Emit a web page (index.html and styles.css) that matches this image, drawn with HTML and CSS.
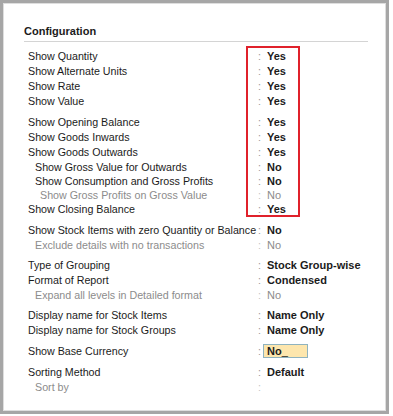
FILE: index.html
```html
<!DOCTYPE html>
<html lang="en">
<head>
    <meta charset="UTF-8">
    <meta name="viewport" content="width=device-width, initial-scale=1.0">
    <title>Configuration</title>
    <link rel="stylesheet" href="styles.css">
</head>
<body>
    <div class="panel">
        <h2 class="title">Configuration</h2>

        <div class="rows">
            <div class="group">
                <div class="row"><span class="label">Show Quantity</span><span class="colon">:</span><span class="value">Yes</span></div>
                <div class="row"><span class="label">Show Alternate Units</span><span class="colon">:</span><span class="value">Yes</span></div>
                <div class="row"><span class="label">Show Rate</span><span class="colon">:</span><span class="value">Yes</span></div>
                <div class="row"><span class="label">Show Value</span><span class="colon">:</span><span class="value">Yes</span></div>
            </div>

            <div class="group">
                <div class="row"><span class="label">Show Opening Balance</span><span class="colon">:</span><span class="value">Yes</span></div>
                <div class="row"><span class="label">Show Goods Inwards</span><span class="colon">:</span><span class="value">Yes</span></div>
                <div class="row"><span class="label">Show Goods Outwards</span><span class="colon">:</span><span class="value">Yes</span></div>
                <div class="row sub"><span class="label">Show Gross Value for Outwards</span><span class="colon">:</span><span class="value">No</span></div>
                <div class="row sub"><span class="label">Show Consumption and Gross Profits</span><span class="colon">:</span><span class="value">No</span></div>
                <div class="row sub deep muted"><span class="label">Show Gross Profits on Gross Value</span><span class="colon">:</span><span class="value">No</span></div>
                <div class="row"><span class="label">Show Closing Balance</span><span class="colon">:</span><span class="value">Yes</span></div>
            </div>

            <div class="group">
                <div class="row"><span class="label">Show Stock Items with zero Quantity or Balance</span><span class="colon">:</span><span class="value">No</span></div>
                <div class="row sub muted"><span class="label">Exclude details with no transactions</span><span class="colon">:</span><span class="value">No</span></div>
            </div>

            <div class="group">
                <div class="row"><span class="label">Type of Grouping</span><span class="colon">:</span><span class="value">Stock Group-wise</span></div>
                <div class="row"><span class="label">Format of Report</span><span class="colon">:</span><span class="value">Condensed</span></div>
                <div class="row sub muted"><span class="label">Expand all levels in Detailed format</span><span class="colon">:</span><span class="value">No</span></div>
            </div>

            <div class="group">
                <div class="row"><span class="label">Display name for Stock Items</span><span class="colon">:</span><span class="value">Name Only</span></div>
                <div class="row"><span class="label">Display name for Stock Groups</span><span class="colon">:</span><span class="value">Name Only</span></div>
            </div>

            <div class="group">
                <div class="row"><span class="label">Show Base Currency</span><span class="colon">:</span><span class="value"><span class="field">No<span class="cursor">_</span></span></span></div>
            </div>

            <div class="group">
                <div class="row"><span class="label">Sorting Method</span><span class="colon">:</span><span class="value">Default</span></div>
                <div class="row sub muted"><span class="label">Sort by</span><span class="colon">:</span><span class="value"></span></div>
            </div>
        </div>

        <div class="highlight"></div>
    </div>
</body>
</html>
```

FILE: styles.css
```css
* {
    margin: 0;
    padding: 0;
    box-sizing: border-box;
}

body {
    font-family: "Liberation Sans", Arial, sans-serif;
    font-size: 10.7px;
    color: #1b1b1b;
    background: #ffffff;
}

.panel {
    position: relative;
    width: 389px;
    height: 414px;
    border: 3px solid #a6a6a6;
    box-shadow: inset 1px 1px 0 #dedede, inset -1px -1px 0 #dedede;
    padding: 0 18px 0 21px;
}

.title {
    font-size: 11px;
    font-weight: bold;
    line-height: 14px;
    padding: 21px 0 3px;
    border-bottom: 1px solid #d4d4d4;
}

.rows {
    padding-top: 7px;
}

.group + .group {
    margin-top: 6px;
}

.row {
    display: grid;
    grid-template-columns: 230px 9px 1fr;
    height: 15px;
    line-height: 15px;
    padding-left: 4px;
    white-space: nowrap;
}

.row.sub {
    height: 14px;
    line-height: 14px;
}

.row.sub .label {
    padding-left: 7px;
}

.row.deep .label {
    padding-left: 12px;
}

.colon {
    color: #9a9a9a;
}

.value {
    font-weight: bold;
    font-size: 11px;
}

.muted .label,
.muted .value {
    color: #8c8c8c;
    font-weight: normal;
}

.muted .colon {
    color: #c4c4c4;
}

.field {
    display: inline-block;
    width: 45px;
    height: 14px;
    line-height: 12px;
    margin-left: -4px;
    padding-left: 3px;
    background: #fde6ad;
    border: 1px solid #8fb3bf;
}

.cursor {
    font-weight: normal;
}

.highlight {
    position: absolute;
    left: 243px;
    top: 43px;
    width: 54px;
    height: 171px;
    border: 2px solid #e0212b;
}
```
